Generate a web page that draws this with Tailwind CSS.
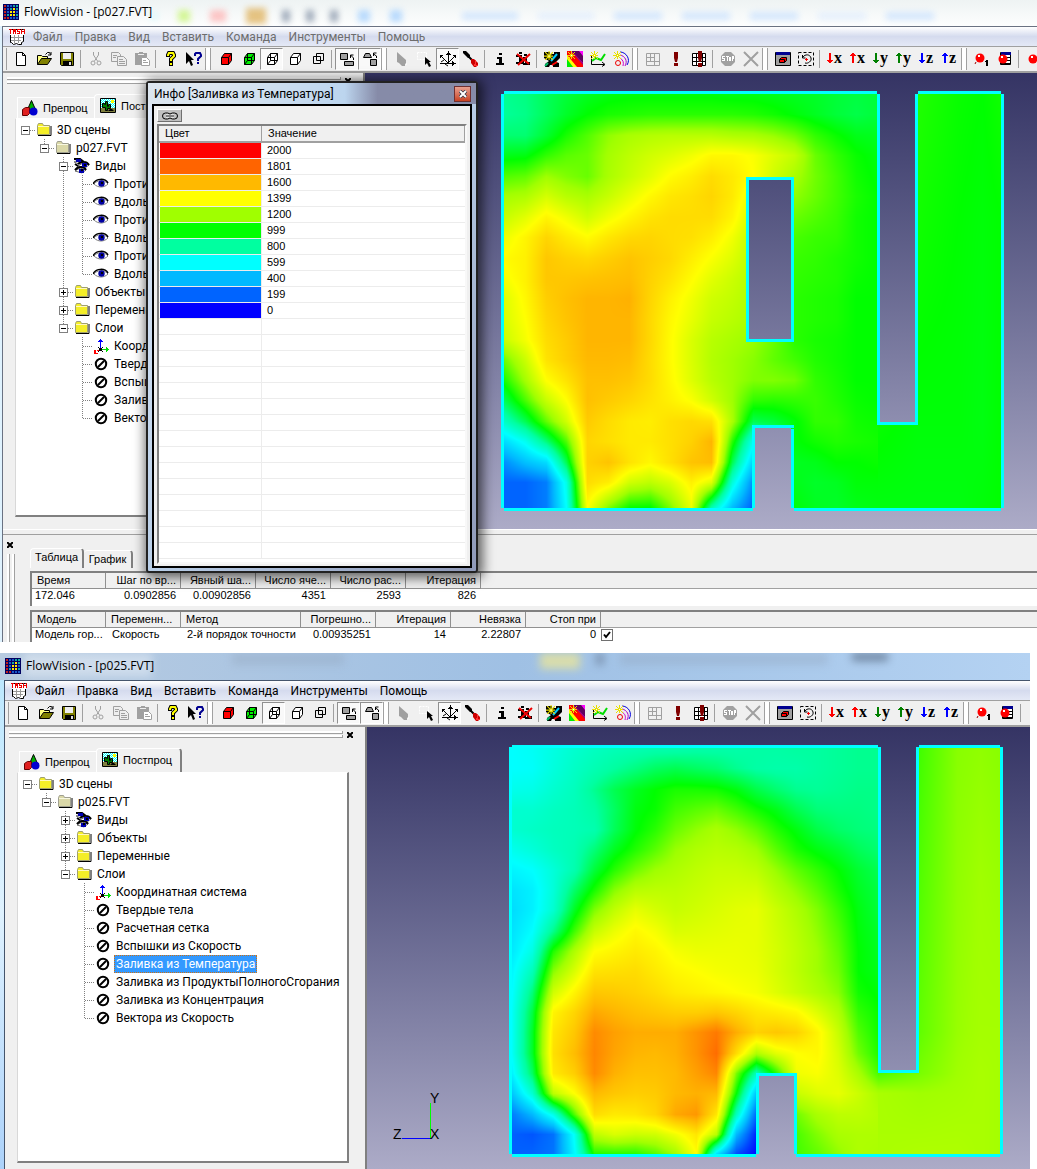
<!DOCTYPE html>
<html lang="ru">
<head>
<meta charset="utf-8">
<meta name="viewport" content="width=device-width, initial-scale=1">
<title>FlowVision</title>
<script src="https://cdn.jsdelivr.net/npm/@tailwindcss/browser@4"></script>
</head>
<body class="flex min-h-screen flex-col bg-white font-['Open_Sans','Noto_Sans',sans-serif] text-[12px] leading-[18px] text-black">

<svg class="absolute size-0" aria-hidden="true" shape-rendering="crispEdges">
  <defs>
    <pattern id="sky" width="2" height="2" patternUnits="userSpaceOnUse"><rect width="2" height="2" fill="#0ff"/><rect width="1" height="1" fill="#fff"/><rect x="1" y="1" width="1" height="1" fill="#fff"/></pattern>
    <symbol id="i-app" viewBox="0 0 16 16"><path fill="#000060" d="M0 0h16v16H0z"/><path fill="#c02020" d="M1 1h2v2H1zM1 4h2v2H1zM1 7h2v2H1zM1 10h2v2H1zM4 13h2v2H4zM1 13h2v2H1z"/><path fill="#1858c8" d="M4 1h2v2H4zM7 1h2v2H7zM4 4h2v2H4zM13 7h2v2h-2zM4 7h2v2H4zM10 13h2v2h-2zM13 13h2v2h-2zM7 13h2v2H7z"/><path fill="#10a8a0" d="M10 1h2v2h-2zM13 1h2v2h-2zM7 4h2v2H7zM13 4h2v2h-2zM4 10h2v2H4zM13 10h2v2h-2z"/><path fill="#ffe800" d="M10 4h2v2h-2zM7 7h2v2H7zM10 7h2v2h-2zM7 10h2v2H7zM10 10h2v2h-2z"/></symbol>
    <symbol id="i-task" viewBox="0 0 16 16"><path fill="#fff" stroke="#000" d="M1.500.5h13v12l-2 1v2h-3l-2-1-3 1-2-2h-1z"/><path stroke="#999" fill="none" d="M2 8.500h12M2 11.500h10M5.500 6v8M9.500 6v8"/><path fill="#fff" d="M1 1h14v5H1z"/><path fill="#e00" d="M0 0h3v1H2v4H1V1H0zM4 0h3v5H6V3H5v2H4zM8 0h3v1H9v1h2v3H8V4h2V3H8zM12 0h1v2h2V0h1v5h-1V3h-2v2h-1z"/></symbol>
    <symbol id="i-new" viewBox="0 0 16 16"><path fill="#fff" stroke="#000" d="M3.500 1.500h6l3 3v10h-9z"/><path fill="none" stroke="#000" d="M9.500 1.500v3h3"/></symbol>
    <symbol id="i-open" viewBox="0 0 16 16"><path fill="#ffff80" stroke="#000" d="M1.500 13.500v-9h4l1 1h5v2"/><path fill="#808000" stroke="#000" d="M1.500 13.500l4-6h10l-4 6z"/><path fill="none" stroke="#000" d="M9.500 3.500l2-2h2l1 2M15 1v3h-3"/></symbol>
    <symbol id="i-save" viewBox="0 0 16 16"><path fill="#808000" stroke="#000" d="M1.500 1.500h13v13h-12l-1-1z"/><path fill="#eee" d="M4 2h8v6H4z"/><path d="M4 10h9v4H4z"/><path fill="#ddd" d="M10 11h2v3h-2z"/></symbol>
    <symbol id="i-cut" viewBox="0 0 16 16"><g fill="none" stroke="#a0a0a0"><path d="M5.500 1v3l4 6M10.500 1v3l-4 6"/><circle cx="5" cy="12" r="2"/><circle cx="11" cy="12" r="2"/></g></symbol>
    <symbol id="i-copy" viewBox="0 0 16 16"><path fill="#eee" stroke="#a0a0a0" d="M.5 1.500h7l2 2v7h-9z"/><path fill="#eee" stroke="#a0a0a0" d="M6.500 5.500h6l3 3v6h-9z"/><path stroke="#a0a0a0" d="M2 4.500h4M2 6.500h3M8 8.500h4M8 10.500h6M8 12.500h6"/></symbol>
    <symbol id="i-paste" viewBox="0 0 16 16"><path fill="#a0a0a0" d="M1 2h4V1h4v1h4v12H1z"/><path fill="#eee" d="M4 3h6v1H4z"/><path fill="#fff" stroke="#a0a0a0" d="M7.500 6.500h5l3 3v5h-8z"/><path stroke="#a0a0a0" d="M9 9.500h3M9 11.500h5"/></symbol>
    <symbol id="i-help" viewBox="0 0 16 16"><path fill="none" stroke="#000" stroke-width="4" d="M5 6V4l1-2h4l1 2v1L8 8v3"/><path fill="none" stroke="#ff0" stroke-width="2" d="M5 5V4l1-2h4l1 2v1L8 8v2"/><path d="M6 11h4v4H6z"/><path fill="#ff0" d="M7 12h2v2H7z"/></symbol>
    <symbol id="i-chelp" viewBox="0 0 16 16"><path d="M0 1l8 8H5l2 5-2 1-2-5-3 3z"/><path fill="none" stroke="#000090" stroke-width="2" d="M9 5V3l1-1h4l1 2v1l-3 3v2M12 11v2"/></symbol>
    <symbol id="i-cuber" viewBox="0 0 16 16"><path fill="#f00" stroke="#000" d="M3.500 6.500l3-4h7v7l-3 4h-7z"/><path fill="none" stroke="#000" d="M3.500 6.500h7v7M10.500 6.500l3-4"/></symbol>
    <symbol id="i-cubeg" viewBox="0 0 16 16"><path fill="#0e0" stroke="#000" d="M3.500 6.500l3-4h7v7l-3 4h-7z"/><path fill="none" stroke="#000" d="M3.500 6.500h7v7M10.500 6.500l3-4M6.500 2.500v7h7M3.500 13.500l3-4"/></symbol>
    <symbol id="i-cubew" viewBox="0 0 16 16"><path fill="#fff" stroke="#000" d="M3.500 6.500l3-4h7v7l-3 4h-7z"/><path fill="none" stroke="#000" d="M3.500 6.500h7v7M10.500 6.500l3-4M6.500 2.500v7h7M3.500 13.500l3-4"/></symbol>
    <symbol id="i-cubee" viewBox="0 0 16 16"><path fill="#fff" stroke="#000" d="M3.500 6.500l3-4h7v7l-3 4h-7z"/><path fill="none" stroke="#000" d="M3.500 6.500h7v7M10.500 6.500l3-4"/></symbol>
    <symbol id="i-cubef" viewBox="0 0 16 16"><path fill="none" stroke="#000" d="M3.500 5.500h7v7h-7zM6.500 2.500h7v7h-7z"/></symbol>
    <symbol id="i-near" viewBox="0 0 16 16"><path fill="#a0a0a0" stroke="#000" d="M1.500 2.500h7v6h-7zM5.500 10.500h9v4h-9z"/><path fill="none" stroke="#000" d="M14.500 9v-2l-3-3M11.500 7v-3h3"/></symbol>
    <symbol id="i-far" viewBox="0 0 16 16"><path fill="#a0a0a0" stroke="#000" d="M1.500 6.500l2-4h4l2 4zM8.500 8.500h6v6h-6z"/><path fill="none" stroke="#000" d="M14.500 7v-2l-3-2M11.500 5v-3h3"/></symbol>
    <symbol id="i-arrow" viewBox="0 0 16 16"><path fill="#a0a0a0" d="M3 1l9 8v3l-1 3h-3l-3-3-2-1z"/><path fill="#fff" d="M12 12l1 1-2 2v-1z"/></symbol>
    <symbol id="i-select" viewBox="0 0 16 16"><path fill="none" stroke="#fff" stroke-dasharray="2 1" d="M.500 1.500h9v7h-9z"/><path d="M8 6l6 5h-2l2 4-2 1-2-4-2 2z"/></symbol>
    <symbol id="i-axes" viewBox="0 0 16 16"><path d="M8 0h1v11H8zM7 2h3v1H7zM6 3h5v1H6zM0 12h16v1H0zM13 11h1v3h-1zM12 10h1v5h-1zM0 4h1v3H0zM1 4h2v1H1zM15 4h1v3h-1zM13 4h2v1h-2z"/><path fill="none" stroke="#000" d="M1 5l7 7 7-7M4 9l-3 2M5 13l3 2"/></symbol>
    <symbol id="i-driver" viewBox="0 0 16 16"><path d="M0 0h3l4 4v3H5L0 2z"/><path stroke="#000" stroke-width="2" d="M5 5l5 5"/><path fill="#c00" d="M8 8h3l4 4v2l-2 2h-2l-3-4z"/><path fill="#f33" d="M12 9h1v5h2v1h-4v-2h1z"/></symbol>
    <symbol id="i-info" viewBox="0 0 16 16"><path d="M7 2h3v2H7zM5 6h5v6h2v2H4v-2h3V8H5z"/></symbol>
    <symbol id="i-infox" viewBox="0 0 16 16"><path d="M4 1h3v2H4zM1 4h6v6h2v3H1v-2h3V6H1zM9 3h3v2H9zM8 6h4v5h3v3H8v-2h2V8H8z"/><path fill="none" stroke="#e00" stroke-width="2" d="M2 3l12 10M15 3L3 14"/></symbol>
    <symbol id="i-star" viewBox="0 0 8 8"><path fill="none" stroke="#e8e000" d="M4.500 0v8M0 4.500h8M1 1l7 7M8 1L1 8"/><path fill="#fff" d="M4 4h1v1H4z"/></symbol>
    <symbol id="i-vect" viewBox="0 0 16 16"><path d="M0 1h6v2h4V1h6v6l-4 4 3 1v4H9v-2H6l-1 2H1v-3l4-3-5-3z"/><path stroke="#0cf" stroke-width="2" d="M7 10l6-7"/><path stroke="#f00" stroke-width="2" d="M8 14l5-3"/><path stroke="#0b6" stroke-width="2" d="M1 15l3-3"/><use href="#i-star" x="0" y="0" width="9" height="9"/></symbol>
    <symbol id="i-fill" viewBox="0 0 16 16"><path fill="#f0f" d="M0 0h16v16H0z"/><path fill="#600060" d="M16 5v7L4 0h8z"/><path fill="#a00080" d="M16 12v4L5 5l3-2z"/><path fill="#f00" d="M0 0h4l12 14v2H9L0 4z"/><path fill="#ff0" d="M0 4l10 12H6L0 9z"/><path fill="#0e0" d="M0 8l6 8H0z"/><use href="#i-star" x="0" y="0" width="8" height="8"/></symbol>
    <symbol id="i-chart" viewBox="0 0 16 16"><path fill="none" stroke="#000" d="M1.500 5v8.500h13M12 11l3 2.500-3 2"/><path fill="none" stroke="#0d0" stroke-width="2" d="M2 10l4-3 5 2 4-6"/><use href="#i-star" x="0" y="0" width="8" height="8"/></symbol>
    <symbol id="i-contour" viewBox="0 0 16 16"><g fill="none"><circle cx="5" cy="12" r="2.500" stroke="#e00"/><path stroke="#c0c" d="M7 7c3 2 4 4 3 8"/><path stroke="#a0c" d="M7 4c5 1 8 6 5 11"/><path stroke="#00d" d="M7 1c6 0 11 7 7 13"/></g><use href="#i-star" x="0" y="0" width="8" height="8"/></symbol>
    <symbol id="i-grid" viewBox="0 0 16 16"><path fill="none" stroke="#a0a0a0" d="M1.500 2.500h13v12h-13zM1 6.500h8M1 10.500h14M5.500 2v8M9.500 2v12"/></symbol>
    <symbol id="i-excl" viewBox="0 0 16 16"><path fill="#800000" d="M6 1h4v6l-1 4H7L6 7zM6 12h4v3H6z"/></symbol>
    <symbol id="i-gridexcl" viewBox="0 0 16 16"><path fill="#fff" stroke="#000" d="M1.500 2.500h13v12h-13zM1 6.500h14M1 10.500h14M5.500 2v12M11.500 2v12"/><path fill="#800000" d="M7 0h4v7l-1 4H8L7 7zM7 12h4v4H7z"/></symbol>
    <symbol id="i-stop" viewBox="0 0 16 16"><path fill="#a0a0a0" d="M5 1h6l4 4v6l-4 4H5l-4-4V5z"/><path fill="#fff" d="M2 5h3v1H3v1h2v3H2V9h2V8H2zM6 5h3v1H8v4H7V6H6zM9 6h2v4H9zM12 5h2v3h-1v2h-1z"/></symbol>
    <symbol id="i-cross" viewBox="0 0 16 16"><path stroke="#a0a0a0" stroke-width="2" d="M1 1l14 14M15 1L1 15"/></symbol>
    <symbol id="i-wincube" viewBox="0 0 16 16"><path fill="#a0a0a0" stroke="#000" d="M.5 1.500h15v13H.5z"/><path fill="#000090" d="M1 1h14v3H1z"/><path fill="#f00" stroke="#000" d="M4.500 8.500l2-2h5v3l-2 2h-5z"/><path fill="none" stroke="#000" d="M4.500 8.500h5v3"/></symbol>
    <symbol id="i-rotate" viewBox="0 0 16 16"><path fill="none" stroke="#000" stroke-dasharray="3 2" d="M.5 1.500h15v13H.5z"/><path fill="none" stroke="#000" d="M4.500 4v3h3M5 6c2-3 7-3 8 1 1 3-3 6-6 5"/><path fill="#f00" d="M8 7h1v3H8zM7 8h3v1H7z"/></symbol>
    <symbol id="i-ball1" viewBox="0 0 16 16"><circle cx="6" cy="7" r="4.500" fill="#f00"/><path stroke="#900" d="M2 11l-1 2"/><path fill="#fff" d="M4 4h2v2H4z"/><path d="M12 9h2v6h-2zM11 10h1v1h-1z"/></symbol>
    <symbol id="i-balltab" viewBox="0 0 16 16"><path fill="#fff" stroke="#000" d="M3.500 1.500h10v12h-10z"/><path fill="#000090" d="M4 1h10v3H4z"/><path stroke="#000" d="M4 6.500h9M4 9.500h9M4 12.500h9"/><circle cx="6" cy="8" r="4.500" fill="#f00"/><path fill="#fff" d="M4 5h2v2H4z"/></symbol>
    <symbol id="i-ball" viewBox="0 0 16 16"><circle cx="7" cy="8" r="4.500" fill="#f00"/><path fill="#fff" d="M5 5h2v2H5z"/></symbol>
    <symbol id="i-folder" viewBox="0 0 16 16"><path fill="#f4ee28" stroke="#a0a070" d="M1.500 12.500v-9l1-2h4l1 2h6v9z"/><path fill="none" stroke="#fff8c0" d="M2 4.500h11"/><path fill="none" stroke="#000" d="M2 13.500h13V4"/></symbol>
    <symbol id="i-file" viewBox="0 0 16 16"><path fill="#dad8a8" stroke="#a0a090" d="M1.500 12.500v-9l1-2h4l1 2h6v9z"/><path fill="none" stroke="#f8f8e0" d="M2 4.500h11"/><path fill="none" stroke="#000" d="M2 13.500h13V4"/></symbol>
    <symbol id="i-eye" viewBox="0 0 16 16"><path fill="#fff" stroke="#808080" d="M1 8c3-4 10-5 14 0-4 4-10 4-14 0z"/><path fill="none" stroke="#000" stroke-width="1.500" d="M0 8c3-6 12-6 15-1"/><circle cx="8.500" cy="7.500" r="3.200" fill="#0000a0"/><path d="M8 6h2v2H8z"/></symbol>
    <symbol id="i-eyes" viewBox="0 0 16 16"><path fill="#fff" stroke="#707070" d="M0 4l4-2 6 2-5 2zM4 8l5-3 6 2-4 3zM1 13l5-3 6 2-4 3z"/><path fill="none" stroke="#000" stroke-width="2" d="M0 1h6l4 3M4 6c3-3 9-3 11 1M1 12c3-4 9-4 11 0M1 6l3 2"/><path fill="#0000b0" d="M2 1h5v3H2zM8 5h5v4H8zM5 11h5v4H5z"/><path d="M10 6h2v2h-2zM7 11h2v2H7z"/></symbol>
    <symbol id="i-coord" viewBox="0 0 16 16"><path fill="#00f" d="M7 1h1v9H7zM6 2h3v1H6zM5 3h5v1H5z"/><path fill="#0d0" d="M8 11h8v1H8zM13 9h1v5h-1zM14 10h1v3h-1z"/><path fill="#f00" d="M1 13h1v1h1v1h2v1H1zM4 12h2v1H4zM1 12h2v2H1z"/><path d="M6 10h3v3H6zM5 9h1v1H5zM9 9h1v1H9zM5 13h1v1H5zM9 13h1v1H9z"/></symbol>
    <symbol id="i-none" viewBox="0 0 16 16"><g fill="none" stroke="#000" stroke-width="2" shape-rendering="auto"><circle cx="8" cy="8" r="5.200"/><path d="M5 11l6-6"/></g></symbol>
    <symbol id="i-shapes" viewBox="0 0 16 16"><path fill="#00b000" stroke="#000" d="M9.500.5l4 9h-8z"/><path fill="#e02020" stroke="#600" d="M.5 9.500l3-2h4v6l-2 2h-5z"/><circle cx="11.500" cy="11.500" r="4" fill="#0000d0"/></symbol>
    <symbol id="i-post" viewBox="0 0 16 16"><path fill="url(#sky)" stroke="#000" d="M.5.5h15v14H.5z"/><path fill="#808040" d="M1 10h14v4H1z"/><path fill="#008000" stroke="#000" d="M2.500 5.500h2v1h1v-3h2v5h1v-2h2v4h-3v2h-2v-3h-3z"/><path fill="#ff0" d="M11 2h3v3h-3z"/><path d="M8 13l2-2h2l2 2z"/></symbol>
  </defs>
</svg>

<!-- Window: p027.FVT -->
<section class="relative flex flex-col bg-[#f0f0f0]" aria-label="p027">
  <div class="absolute inset-y-0 left-0 w-[3px] border-r border-gray-500 bg-sky-100"></div>
  <header class="relative flex h-[26px] items-center gap-[5px] overflow-hidden bg-gradient-to-b from-[#eef3f3] to-[#fdfefe] pb-[2px] pl-[3px]">
    <div class="absolute inset-0 flex items-center gap-[20px] pl-[150px] pt-[5px] opacity-60 blur-[3px]" aria-hidden="true">
      <i class="h-2 w-2 bg-cyan-100"></i><i class="h-3 w-3 bg-lime-300"></i><i class="h-3 w-4 bg-red-300"></i><i class="h-4 w-5 bg-yellow-600/80"></i><i class="-ml-1 h-3 w-2 bg-slate-500"></i><i class="-ml-1 h-3 w-2 bg-slate-500"></i><i class="-ml-1 h-3 w-2 bg-slate-500"></i><i class="h-3 w-3 bg-blue-300"></i><i class="h-3 w-3 bg-blue-300"></i><i class="ml-10 h-2 w-14 bg-blue-200"></i><i class="h-2 w-14 bg-blue-100"></i><i class="h-2 w-12 bg-blue-200"></i><i class="h-2 w-12 bg-blue-200"></i><i class="h-2 w-12 bg-blue-200"></i><i class="h-2 w-12 bg-blue-100"></i><i class="h-2 w-12 bg-blue-200"></i>
    </div>
    <svg class="relative size-4"><use href="#i-app"/></svg>
    <h1 class="relative text-[12px]">FlowVision - [p027.FVT]</h1>
  </header>
  <nav data-menu class="ml-[3px] flex h-[21px] items-center border-b border-[#a0a0a0] border-t border-t-gray-500 bg-gradient-to-b from-white via-[#d5dbee] to-[#e4e9f6] pl-[6px] font-['Roboto','Noto_Sans',sans-serif] text-[#6d6d6d]"></nav>
  <div data-toolbar class="ml-[3px] flex h-[26px] items-center overflow-hidden border-b-2 border-[#a0a0a0] pl-[3px]"></div>

  <div class="ml-[3px] flex min-h-[456px]">
    <aside data-dock="p027" class="flex w-[360px] shrink-0 flex-col"></aside>
    <main class="relative min-w-0 flex-1 overflow-hidden border-l-2 border-[#808080] bg-gradient-to-b from-[#353464] to-[#acabc7]">
      <canvas data-scene="0" width="530" height="434" class="absolute top-[7px] left-[125px]"></canvas>
    </main>
  </div>

  <div class="ml-[3px] flex h-[113px] overflow-hidden border-t border-white">
    <div class="mt-[4px] flex w-[27px] shrink-0 flex-col border-t border-[#a0a0a0] pt-[4px]">
      <button aria-label="Закрыть панель" class="grid h-3 w-[14px] place-items-center"><svg viewBox="0 0 6 6" class="size-[6px]"><path d="M0 0l6 6M6 0L0 6" stroke="#000" stroke-width="2"/></svg></button>
      <div class="mt-[3px] ml-[4px] flex flex-1 gap-[2px]"><i class="w-[3px] border-r border-[#a0a0a0] bg-white"></i><i class="w-[3px] border-r border-[#a0a0a0] bg-white"></i></div>
    </div>
    <div class="mt-[4px] min-w-0 flex-1 border-t border-[#a0a0a0] pt-[13px] font-['Liberation_Sans',Arial,sans-serif] text-[11px] leading-[13px]">
      <div class="flex items-end" role="tablist">
        <button role="tab" class="h-[20px] w-[54px] rounded-t-sm border-t border-r-2 border-l border-t-white border-r-[#808080] border-l-white pb-[3px] text-center">Таблица</button>
        <button role="tab" class="h-[18px] w-[49px] rounded-t-sm border-t border-r-2 border-t-white border-r-[#808080] pb-px text-center">График</button>
      </div>
      <div class="mt-[3px] h-[35px] border-t-2 border-l-2 border-[#808080] bg-white">
        <table data-grid="0" class="w-full table-fixed border-separate border-spacing-0"></table>
      </div>
      <div class="mt-[4px] h-[36px] border-t-2 border-l-2 border-[#808080] bg-white">
        <table data-grid="1" class="w-full table-fixed border-separate border-spacing-0"></table>
      </div>
    </div>
  </div>

  <!-- Floating legend window -->
  <div role="dialog" aria-label="Инфо" class="absolute top-[81px] left-[146px] flex h-[492px] w-[332px] flex-col rounded-[3px] border-2 border-[#222] bg-gradient-to-br from-[#dfeafa] via-[#b9cfe8] to-[#8f99b8] px-[4px] pb-[3px] shadow-[2px_2px_12px_3px_rgba(0,0,0,0.6)]">
    <div class="-mx-[4px] flex h-[21px] items-center justify-between bg-gradient-to-r from-[#dce6f0] from-20% via-[#bcd5ee] via-60% to-[#868ba8] to-70% pr-[5px] pl-[6px]">
      <h2 class="font-['Roboto','Noto_Sans',sans-serif] text-[12px]">Инфо [Заливка из Температура]</h2>
      <button aria-label="Закрыть" class="grid h-[16px] w-[17px] place-items-center border border-[#703030] bg-gradient-to-b from-[#e8a090] to-[#c84020]"><svg viewBox="0 0 8 8" class="size-[8px]"><path d="M1 1l6 6M7 1L1 7" stroke="#334" stroke-width="3.500"/><path d="M1 1l6 6M7 1L1 7" stroke="#fff" stroke-width="2"/></svg></button>
    </div>
    <div class="flex min-h-0 flex-1 flex-col border-2 border-black bg-[#f0f0f0] px-[3px] pt-[3px] pb-[2px]">
      <button aria-label="Связать" class="grid h-[13px] w-[25px] shrink-0 place-items-center border border-[#fff] border-r-[#707070] border-b-[#707070] bg-[#c0c0c0]"><svg viewBox="0 0 16 8" class="h-[8px] w-[16px]"><g fill="none" stroke="#000"><rect x=".5" y="1" width="8" height="6" rx="3"/><rect x="7.500" y="1" width="8" height="6" rx="3"/></g><path d="M4 4h8" stroke="#fff" stroke-width="3"/><path d="M4 4h8" stroke="#000"/></svg></button>
      <div class="mt-[2px] min-h-0 flex-1 overflow-hidden border-2 border-[#f8f8f8] border-t-[#808080] border-l-[#808080] bg-white font-['Liberation_Sans',Arial,sans-serif] text-[11px] leading-[13px]">
        <table class="w-full table-fixed border-separate border-spacing-0">
          <thead><tr class="h-[17px] bg-[#f0f0f0] text-left"><th class="w-[103px] border-r border-b-2 border-[#a0a0a0] pl-[6px] font-normal">Цвет</th><th class="border-r border-b-2 border-[#a0a0a0] pl-[6px] font-normal">Значение</th></tr></thead>
          <tbody data-legend></tbody>
        </table>
      </div>
    </div>
  </div>
</section>

<!-- Window: p025.FVT -->
<section class="relative mt-[11px] mr-[7px] flex flex-1 flex-col bg-[#f0f0f0]" aria-label="p025">
  <div class="absolute inset-y-0 left-0 w-[5px] border-r border-slate-600 bg-gradient-to-b from-sky-200 via-sky-100 to-[#acd2fa]"></div>
  <header class="relative flex h-[27px] items-center gap-[5px] overflow-hidden bg-gradient-to-r from-[#b8cbe0] via-[#9fc0e4] to-[#b4d2f2] pb-[2px] pl-[5px]">
    <div class="absolute inset-0 flex items-start gap-[8px] pl-[24px] opacity-60 blur-[4px]" aria-hidden="true">
      <i class="h-6 w-32 bg-white/60"></i><i class="ml-18 h-3 w-28 bg-slate-400/60"></i><i class="ml-47 h-4 w-10 bg-yellow-200"></i><i class="ml-2 h-3 w-2 bg-slate-500"></i><i class="ml-2 h-3 w-52 bg-slate-400/60"></i><i class="ml-4 h-2 w-9 bg-slate-600"></i>
    </div>
    <svg class="relative size-4"><use href="#i-app"/></svg>
    <h1 class="relative text-[12px]">FlowVision - [p025.FVT]</h1>
  </header>
  <nav data-menu class="relative ml-[5px] flex h-[21px] items-center border-b border-[#a0a0a0] border-t border-t-slate-600 bg-gradient-to-b from-white via-[#d5dbee] to-[#e4e9f6] pl-[6px] font-['Roboto','Noto_Sans',sans-serif]"></nav>
  <div data-toolbar class="ml-[5px] flex h-[26px] items-center overflow-hidden border-b-2 border-[#a0a0a0] pl-[3px]"></div>
  <div class="ml-[5px] flex flex-1">
    <aside data-dock="p025" class="flex w-[360px] shrink-0 flex-col"></aside>
    <main class="relative min-w-0 flex-1 overflow-hidden border-l-2 border-[#808080] bg-gradient-to-b from-[#353464] to-[#acabc7]">
      <canvas data-scene="1" width="530" height="434" class="absolute top-[8px] left-[123px]"></canvas>
      <svg viewBox="0 0 52 54" class="absolute bottom-[25px] left-[24px] h-[54px] w-[52px]" aria-label="Оси">
        <g shape-rendering="crispEdges"><path d="M39.500 13v35" stroke="#0f0"/><path d="M11 48.500h29" stroke="#00f"/></g>
        <g font-family="Liberation Sans, Arial, sans-serif" font-size="14"><text x="39" y="13">Y</text><text x="2" y="49">Z</text><text x="39" y="49">X</text></g>
      </svg>
    </main>
  </div>
</section>

<script>
const all = (s) => document.querySelectorAll(s);
const icon = (n) => `<svg class="size-4 shrink-0"><use href="#i-${n}"/></svg>`;

// Menu bar
const menu = ['Файл', 'Правка', 'Вид', 'Вставить', 'Команда', 'Инструменты', 'Помощь'];
all('[data-menu]').forEach((el) => {
  el.innerHTML = icon('task') + '<div class="flex gap-[12px] pl-[8px]">' +
    menu.map((m) => `<button class="whitespace-nowrap">${m}</button>`).join('') + '</div>';
});

// Toolbar: "|" is a separator, "||" a new band, a leading "*" a pressed button
const tools = 'new open save | cut copy paste | help chelp || cuber cubeg *cubew cubee cubef | *near *far || arrow select *axes driver | info infox | vect fill chart contour || grid excl gridexcl | stop cross || wincube rotate | ↓x ↑x ↓y ↑y ↓z ↑z || ball1 balltab | ball'.split(' ');
const axisColor = { x: '#ff0000', y: '#008000', z: '#0000ff' };
const bar = tools.map((t) => {
  if (t === '|') return '<i class="mr-[3px] h-[18px] w-[3px] shrink-0 border-r border-[#a0a0a0]"></i>';
  if (t === '||') return '<i class="mr-[3px] h-[22px] w-[6px] shrink-0 border-x border-[#a0a0a0] bg-white"></i>';
  const on = t[0] === '*';
  const name = on ? t.slice(1) : t;
  const axis = axisColor[name[1]] && name.length === 2;
  const art = axis
    ? `<svg class="h-4 w-[18px]" viewBox="0 0 18 16"><path shape-rendering="crispEdges" fill="${axisColor[name[1]]}" d="${name[0] === '↓' ? 'M3 2h2v7h2v1H6v1H5v1H3v-1H2v-1H1V9h2z' : 'M3 12h2V5h2V4H6V3H5V2H3v1H2v1H1v1h2z'}"/><text x="8" y="12" font-family="Liberation Serif, serif" font-weight="700" font-size="16">${name[1]}</text></svg>`
    : icon(name);
  return `<button aria-label="${name}" class="${on ? 'grid h-[22px] w-[23px] shrink-0 place-items-center border border-white border-t-[#909090] border-l-[#909090] bg-[#f9f9f9]' : 'grid h-[22px] w-[23px] shrink-0 place-items-center'}">${art}</button>`;
}).join('');
all('[data-toolbar]').forEach((el) => { el.innerHTML = '<i class="mr-[2px] h-[22px] w-px shrink-0 bg-[#a0a0a0]"></i>' + bar; });

// Scene tree: [guides, toggle, last sibling (2 = root), icon, label, selected]
const trees = {
  p027: [
    ['', '-', 2, 'folder', '3D сцены'], [' ', '-', 1, 'file', 'p027.FVT'], ['  ', '-', 0, 'eyes', 'Виды'],
    ['  |', '', 0, 'eye', 'Против'], ['  |', '', 0, 'eye', 'Вдоль'], ['  |', '', 0, 'eye', 'Против'],
    ['  |', '', 0, 'eye', 'Вдоль'], ['  |', '', 0, 'eye', 'Против'], ['  |', '', 1, 'eye', 'Вдоль'],
    ['  ', '+', 0, 'folder', 'Объекты'], ['  ', '+', 0, 'folder', 'Переменные'], ['  ', '-', 1, 'folder', 'Слои'],
    ['   ', '', 0, 'coord', 'Координатная система'], ['   ', '', 0, 'none', 'Твердые тела'], ['   ', '', 0, 'none', 'Вспышки'],
    ['   ', '', 0, 'none', 'Заливка'], ['   ', '', 1, 'none', 'Вектора'],
  ],
  p025: [
    ['', '-', 2, 'folder', '3D сцены'], [' ', '-', 1, 'file', 'p025.FVT'], ['  ', '+', 0, 'eyes', 'Виды'],
    ['  ', '+', 0, 'folder', 'Объекты'], ['  ', '+', 0, 'folder', 'Переменные'], ['  ', '-', 1, 'folder', 'Слои'],
    ['   ', '', 0, 'coord', 'Координатная система'], ['   ', '', 0, 'none', 'Твердые тела'], ['   ', '', 0, 'none', 'Расчетная сетка'],
    ['   ', '', 0, 'none', 'Вспышки из Скорость'], ['   ', '', 0, 'none', 'Заливка из Температура', true],
    ['   ', '', 0, 'none', 'Заливка из ПродуктыПолногоСгорания'], ['   ', '', 0, 'none', 'Заливка из Концентрация'], ['   ', '', 1, 'none', 'Вектора из Скорость'],
  ],
};
// A guide at depth 2 belongs to the column of the views branch
trees.p027.forEach((row) => { if (row[0] === '  |') row[0] = '  |'.replace(' |', '| '); });
const cell = (d, box) => `<svg class="h-[18px] w-[19px] shrink-0" viewBox="0 0 19 18" shape-rendering="crispEdges"><path d="${d}" fill="none" stroke="#808080" stroke-dasharray="1 1"/>${box ? `<rect x="5.500" y="5.500" width="8" height="8" fill="#fff" stroke="#808080"/><path d="M7 9.500h5${box === '+' ? 'M9.500 7v5' : ''}" stroke="#000"/>` : ''}</svg>`;
const treeRow = ([guides, toggle, last, ic, label, selected]) => {
  const depth = guides.length;
  const cells = [...guides].map((g, i) => cell(guides.includes('|') && i === 2 ? 'M9.500 0v18' : '')).join('');
  const lines = last === 2 ? 'M10 9.500h9' : last ? 'M9.500 0v10M10 9.500h9' : 'M9.500 0v18M10 9.500h9';
  return `<li aria-level="${depth + 1}" class="flex h-[18px] items-center">${cells}${cell(lines, toggle)}<span class="ml-px flex w-[18px] shrink-0">${icon(ic)}</span><span class="${selected ? 'ml-px bg-[#3399ff] px-[2px] text-white outline-1 -outline-offset-1 outline-dotted outline-[#d07010]' : 'ml-px px-[2px]'} whitespace-nowrap">${label}</span></li>`;
};
all('[data-dock]').forEach((el) => {
  const id = el.dataset.dock;
  const bottom = id === 'p027' ? 'mb-[12px]' : 'mb-[6px]';
  el.innerHTML = `
    <div class="flex h-[13px] items-center gap-px pt-[2px] pl-[4px]">
      <div class="flex w-[334px] flex-col gap-px"><i class="h-[3px] border-r border-b border-[#a0a0a0] bg-white"></i><i class="h-[3px] border-r border-b border-[#a0a0a0] bg-white"></i></div>
      <button aria-label="Закрыть панель" class="grid size-3 place-items-center"><svg viewBox="0 0 6 6" class="size-[6px]"><path d="M0 0l6 6M6 0L0 6" stroke="#000" stroke-width="2"/></svg></button>
    </div>
    <div class="mt-[8px] ml-[14px] flex items-end font-['Liberation_Sans',Arial,sans-serif] text-[11px]" role="tablist">
      <button role="tab" class="flex h-[21px] w-[77px] items-center gap-[5px] border-t border-l border-white pl-[4px]">${icon('shapes')}Препроц</button>
      <button role="tab" aria-selected="true" class="flex h-[24px] w-[86px] items-center gap-[5px] rounded-t-sm border-t border-r-2 border-l border-t-white border-r-[#808080] border-l-white pb-px pl-[5px]">${icon('post')}Постпроц</button>
    </div>
    <ul class="${bottom} mr-[16px] ml-[12px] flex-1 border-t border-r-2 border-b-2 border-l border-t-white border-r-[#808080] border-b-[#808080] border-l-[#d8d8d8] bg-white pt-[2px] font-['Roboto','Noto_Sans',sans-serif]">${trees[id].map(treeRow).join('')}</ul>`;
});

// Legend
const legend = [['#ff0000', 2000], ['#ff6400', 1801], ['#ffb900', 1600], ['#ffff00', 1399], ['#a0ff00', 1200], ['#00ff00', 999], ['#00ffa0', 800], ['#00ffff', 599], ['#00b9ff', 400], ['#0064ff', 199], ['#0000ff', 0]];
document.querySelector('[data-legend]').innerHTML = Array.from({ length: 26 }, (_, i) => {
  const [color, value] = legend[i] || ['transparent', ''];
  return `<tr class="h-[16px]"><td class="border-r border-b border-[#ececec] p-0 pl-px"><div class="h-[15px]" style="background:${color}"></div></td><td class="border-b border-[#ececec] p-0 pl-[5px]">${value}</td></tr>`;
}).join('');

// Result tables: [header, value, width, numeric]
const grids = [
  [['Время', '172.046', 74], ['Шаг по вр...', '0.0902856', 75, 1], ['Явный ша...', '0.00902856', 75, 1], ['Число яче...', '4351', 75, 1], ['Число рас...', '2593', 75, 1], ['Итерация', '826', 75, 1]],
  [['Модель', 'Модель гор...', 74], ['Переменн...', 'Скорость', 75], ['Метод', '2-й порядок точности', 120], ['Погрешно...', '0.00935251', 75, 1], ['Итерация', '14', 75, 1], ['Невязка', '2.22807', 75, 1], ['Стоп при', '0', 75, 1]],
];
const check = '<label class="grid size-[12px] place-items-center"><input type="checkbox" checked aria-label="Остановить" class="peer col-start-1 row-start-1 size-[12px] appearance-none border border-[#707070] bg-white"><svg viewBox="0 0 8 8" class="pointer-events-none invisible col-start-1 row-start-1 size-[8px] peer-checked:visible"><path d="M1 3.500l2 2.500 4-5" fill="none" stroke="#000" stroke-width="2"/></svg></label>';
all('[data-grid]').forEach((el, i) => {
  const cols = grids[i];
  el.innerHTML = '<colgroup>' + cols.map((c) => `<col style="width:${c[2]}px">`).join('') + '<col></colgroup><thead><tr class="h-[16px] bg-[#f0f0f0]">' +
    cols.map((c) => `<th class="${c[3] ? 'border-r border-b border-[#909090] p-0 pr-[4px] text-right font-normal whitespace-nowrap' : 'border-r border-b border-[#909090] p-0 pl-[5px] text-left font-normal whitespace-nowrap'}">${c[0]}</th>`).join('') +
    '<th class="border-b border-[#a0a0a0] p-0"></th></tr></thead><tbody><tr class="h-[13px]">' +
    cols.map((c, k) => `<td class="${c[3] ? 'p-0 pr-[5px] text-right whitespace-nowrap' : k ? 'p-0 pl-[6px] whitespace-nowrap' : 'p-0 pl-[3px] whitespace-nowrap'}">${c[1]}</td>`).join('') +
    `<td class="p-0">${i ? check : ''}</td></tr></tbody>`;
});

// Temperature fields, hundreds of degrees, on the nodes of the computational mesh
const scenes = [
  {
    x: [14, 35, 56, 76, 97, 118, 139, 160, 180, 201, 221, 242, 263, 283, 304, 325, 346, 366, 388],
    y: [14, 34, 55, 75, 96, 116, 137, 157, 178, 198, 218, 239, 259, 279, 300, 320, 341, 361, 382, 402, 428],
    v: `8.2 8.4 8.9 9.3 9.6 9.8 9.9 9.9 9.9 9.9 9.9 9.8 9.8 9.7 9.6 9.5 9.3 9.2 9.3
8.1 8.3 8.9 9.5 10 10.3 10.4 10.5 10.5 10.5 10.5 10.5 10.4 10.2 9.9 9.6 9.3 9.1 9.3
8.6 8.6 9.4 10.3 11 11.8 12.2 12.4 12.5 12.5 12.5 12.3 12.2 11.9 11.4 10.6 10.1 9.7 9.6
9.7 9.8 10.6 11.1 11.3 12.1 12.6 13 13.3 13.7 14.2 14.2 13.9 13.3 12.7 11.3 10.6 10.1 9.8
11 11.2 12 11.6 11.3 12.2 12.8 13.4 14.1 14.5 15 14.6 14 13 12.2 11.4 10.8 10.2 9.9
12.1 12.3 13.1 12.5 12.2 12.8 13.5 14.2 14.7 14.9 15.2 14.6 13.4 12.4 11.8 11.3 10.8 10.3 10
12.8 13.4 14.3 13.7 13 13.7 14.3 14.8 15 15 15 14.3 12.9 12 11.3 11 10.7 10.2 10
13.6 14.3 15.2 14.6 14.1 14.7 15.1 15.2 15 14.9 14.5 13.7 12.6 11.6 10.9 10.7 10.6 10.2 10
14.1 14.4 15.6 15.3 15.1 15.4 15.7 15.4 15.1 14.5 13.9 13.3 12.5 11.5 10.7 10.6 10.4 10.2 10
13.8 14.4 15.6 15.6 15.7 15.8 15.9 15.3 14.8 14.1 13.4 12.9 12.4 11.4 10.6 10.5 10.4 10.1 10
13.3 14.2 15.4 15.8 16.1 16.1 16.2 15.2 14.4 13.7 13 12.7 12.3 11.4 10.5 10.4 10.3 10 10
13.2 14 15.2 15.7 16.1 16.1 16.1 15.1 14.2 13.5 12.8 12.5 12.2 11.4 10.5 10.4 10.3 10 10
12.9 13.8 15 15.5 16.1 16.1 16.1 15.1 14.1 13.2 12.5 12.2 11.9 11.3 10.5 10.3 10.2 10 10
11.4 12.9 14.8 15.4 16 16 15.9 15 14.1 13.2 12.4 12 11.7 11.2 10.8 10.4 10.2 10 10
10.3 12.1 14 14.8 15.8 15.8 15.6 15 14.2 13.3 12.5 12 11.6 11.6 11.4 10.6 10.3 10 10
9 10.9 12.8 14 15.8 15.5 15.2 14.8 14.4 13.9 13 12 10.6 10.5 10.6 10.7 10.4 10.1 10
7.3 9 11.2 13 15.5 15 14.6 14.5 14.9 15.1 14.9 12.2 9 9.3 9.9 10.6 10.6 10.2 10.1
5 6.3 8.5 11 15.2 14.9 14.6 14.6 14.9 15.3 16.1 10.5 6.3 8 9.9 10.2 10.4 10.3 10.2
3 4.2 5 9 15.3 15.7 14.8 14.2 14.9 15.7 15.9 9 4.6 7 9.6 9.7 10 10 10.1
2 2 2.6 6.5 15 14.5 13 12.6 13.2 14.4 13.3 6.8 2.8 4 9.7 9.5 9.6 9.9 9.9
2 2 2.6 6 13.9 11.5 10 9.9 11.5 13.5 7.5 4 1.8 4 9.9 9.6 9.5 9.7 9.8`,
    right: { x: [388, 428, 468, 492, 512], y: [14, 140, 340, 428], v: `10 10.4 10.1 10 10.2
10 10.2 10 9.9 10
10.1 9.9 9.9 9.8 10
9.8 9.8 9.8 9.9 10` },
    holes: [[390, 0, 35, 342], [259, 100, 42, 159], [265, 348, 36, 90]],
    lines: [[11, 14, 3, 414], [14, 11, 373, 3], [387, 14, 3, 331], [387, 342, 41, 3], [425, 14, 3, 331], [428, 11, 83, 3], [511, 14, 3, 414], [14, 428, 249, 3], [304, 428, 207, 3], [262, 345, 3, 83], [262, 345, 42, 3], [301, 349, 3, 79], [256, 97, 48, 3], [256, 97, 3, 165], [301, 97, 3, 165], [256, 259, 48, 3]],
    box: [14, 14, 511, 428],
  },
  {
    x: [22, 42, 63, 84, 104, 124, 145, 165, 185, 206, 226, 246, 266, 286, 306, 327, 348, 368, 388],
    y: [13, 33, 54, 74, 94, 114, 135, 155, 175, 196, 216, 236, 257, 277, 297, 318, 338, 358, 379, 399, 419],
    v: `6 6.2 6.6 7 7.3 7.5 7.6 7.7 7.7 7.8 7.8 7.8 7.9 7.9 8 8 8.1 8.2 8.2
6 6.1 6.7 7.2 7.6 8 8.4 8.8 9 8.8 8.6 8.2 7.9 7.8 7.8 8 8.1 8.2 8.2
6.4 6.5 7 7.4 8.2 9 9.6 10 10.3 10.3 10.2 9.8 9.1 8.6 8.2 8.1 8.2 8.3 8.3
7 7 7.3 7.5 7.9 8.8 9.8 10.1 10.8 11.1 11.3 10.8 10.2 9.7 9 8.5 8.4 8.4 8.3
7 7.2 7.4 7.5 7.7 8.9 9.9 10.5 11.3 11.8 12.2 11.8 11.2 10.4 9.8 9.1 8.7 8.5 8.4
6.4 6.8 7.3 7.6 8.5 9.6 10.4 11.1 11.9 12.3 12.5 12.4 12 11.1 10.3 9.8 9.4 8.9 8.6
5.7 6 6.8 7.7 9.3 10.5 11.4 12 12.3 12.6 12.8 12.8 12.6 11.9 11.2 10.6 10 9.4 9
5.2 5.6 6.8 8.7 10.3 11.7 12.5 12.6 12.6 12.8 13 13.1 13.1 12.4 11.8 11.1 10.3 9.6 9.2
5 5.6 7 9.6 11.6 12.7 13.5 13.1 12.8 13 13.2 13.4 13.5 12.9 12.3 11.6 10.7 9.8 9.3
5.2 6 8.3 10.8 12.8 13.6 14.2 13.8 13.2 13.3 13.4 13.5 13.5 13 12.5 11.8 11 9.9 9.5
5.4 6.6 10.4 12.3 14 14.3 14.6 14.3 13.8 13.6 13.6 13.6 13.5 13.1 12.6 12 11.2 10 9.6
5.8 7.5 11.7 13.2 14.8 14.9 15 14.6 14.2 14 13.8 13.7 13.6 13.1 12.6 12 11.4 10 9.7
6 8.5 13 14.3 15.6 15.5 15.3 15 14.6 14.4 14.2 14 13.8 13.3 12.8 12.3 11.7 10.2 9.9
6.2 9.2 14.3 15.2 16.4 16.1 15.8 15.6 15.4 15.4 15.6 15.2 14.7 14.5 14.2 13.3 12.3 10.6 10.1
6.2 9.5 14.7 15.6 17.1 16.6 16.3 16.3 16.3 16.9 17.5 16.3 15.3 15.6 15.3 14.3 12.8 11 10.2
6.2 9.5 14.9 15.9 17.2 16.5 16.1 16 16.2 16.9 17.8 15 12.3 13.4 14 14.2 13.1 11.4 10.4
5.7 8.8 14.6 15.4 17.1 16.2 15.8 15.8 16 16.6 17.2 11.5 7.5 10.5 13.7 13.9 13.3 12.2 10.9
4.4 7 12.6 14 16 15.6 15.4 15.5 16 16.2 16 10 4.2 8 12.8 13.3 13.5 12.9 12.2
2.6 4 6.5 11 15 14.6 14.7 15.2 16.4 16.8 14.7 7.4 2 5 11.4 12.2 12.6 12.6 12.4
1.9 1.7 2.3 6.2 12.6 13.2 12.9 13 13.7 14.7 12.5 4 0.6 3 10.9 11.6 12.2 12.3 12.3
1.9 2 2.4 5.8 10.3 10.4 10.4 11 12 14 5 1.4 0.2 3 10.8 11.2 11.8 12.3 12.2`,
    right: { x: [388, 429, 467, 490, 511], y: [13, 140, 297, 338, 358, 419], v: `10 10.8 11.7 11.8 11.7
10 11 11.8 12 11.9
10 11.2 11.9 12.1 12.1
10.9 11.5 12 12.2 12.1
12.2 12 12.1 12.2 12.1
12.2 12.3 12.3 12.2 12.1` },
    holes: [[391, 0, 35, 335], [269, 341, 35, 93]],
    lines: [[19, 12, 3, 407], [22, 10, 366, 3], [388, 12, 3, 326], [388, 335, 41, 3], [426, 12, 3, 326], [429, 10, 81, 3], [510, 12, 3, 407], [22, 419, 244, 3], [306, 419, 204, 3], [266, 338, 3, 81], [266, 338, 40, 3], [304, 338, 3, 81]],
    box: [22, 13, 510, 419],
  },
];
const scale = [[0, 0, 255], [0, 100, 255], [0, 185, 255], [0, 255, 255], [0, 255, 160], [0, 255, 0], [160, 255, 0], [255, 255, 0], [255, 185, 0], [255, 100, 0], [255, 0, 0]];
const parse = (t) => t.trim().split('\n').map((r) => r.trim().split(/\s+/).map(Number));
const locate = (a, p) => {
  let i = 0;
  while (i < a.length - 2 && p > a[i + 1]) i++;
  return [i, Math.min(1, Math.max(0, (p - a[i]) / (a[i + 1] - a[i])))];
};
const sample = (m, px, py) => {
  const [i, u] = locate(m.x, px);
  const [j, w] = locate(m.y, py);
  const a = m.v[j], b = m.v[j + 1];
  return (a[i] * (1 - u) + a[i + 1] * u) * (1 - w) + (b[i] * (1 - u) + b[i + 1] * u) * w;
};
all('[data-scene]').forEach((canvas) => {
  const s = scenes[canvas.dataset.scene];
  const left = { x: s.x, y: s.y, v: parse(s.v) };
  const right = { ...s.right, v: parse(s.right.v) };
  // The two meshes meet at x = 388, under the slot
  const ctx = canvas.getContext('2d');
  const img = ctx.createImageData(canvas.width, canvas.height);
  const [x0, y0, x1, y1] = s.box;
  for (let y = y0; y < y1; y++) for (let x = x0; x < x1; x++) {
    const t = Math.min(19.99, Math.max(0, sample(x < 388 ? left : right, x, y))) / 2;
    const k = Math.floor(t), f = t - k, o = (y * canvas.width + x) * 4;
    for (let c = 0; c < 3; c++) img.data[o + c] = scale[k][c] * (1 - f) + scale[k + 1][c] * f;
    img.data[o + 3] = 255;
  }
  ctx.putImageData(img, 0, 0);
  s.holes.forEach((h) => ctx.clearRect(...h));
  ctx.fillStyle = '#00ffff';
  s.lines.forEach((l) => ctx.fillRect(...l));
});
</script>
</body>
</html>
